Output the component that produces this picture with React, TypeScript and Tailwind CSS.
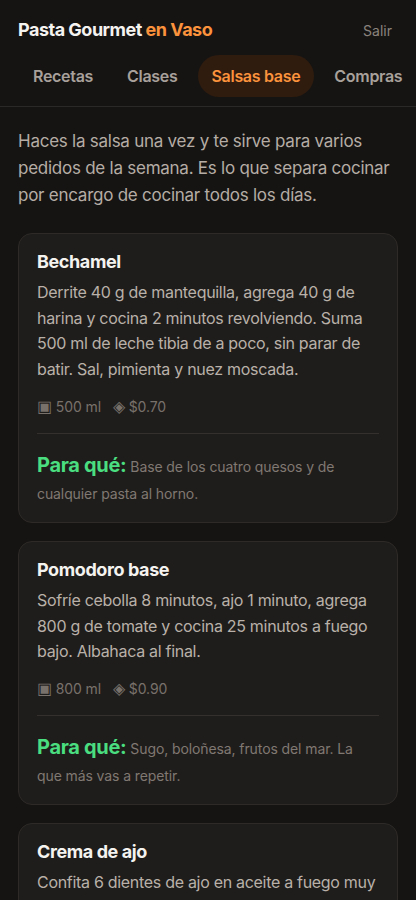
import { useState } from 'react';

interface Sauce {
  name: string;
  steps: string;
  yieldMl: string;
  cost: string;
  usage: string;
}

const TABS = ['Recetas', 'Clases', 'Salsas base', 'Compras', 'Pedidos'];

const SAUCES: Sauce[] = [
  {
    name: 'Bechamel',
    steps:
      'Derrite 40 g de mantequilla, agrega 40 g de harina y cocina 2 minutos revolviendo. Suma 500 ml de leche tibia de a poco, sin parar de batir. Sal, pimienta y nuez moscada.',
    yieldMl: '500 ml',
    cost: '$0.70',
    usage: 'Base de los cuatro quesos y de cualquier pasta al horno.',
  },
  {
    name: 'Pomodoro base',
    steps:
      'Sofríe cebolla 8 minutos, ajo 1 minuto, agrega 800 g de tomate y cocina 25 minutos a fuego bajo. Albahaca al final.',
    yieldMl: '800 ml',
    cost: '$0.90',
    usage: 'Sugo, boloñesa, frutos del mar. La que más vas a repetir.',
  },
  {
    name: 'Crema de ajo',
    steps:
      'Confita 6 dientes de ajo en aceite a fuego muy bajo 20 minutos. Licúa con 200 ml de crema y una pizca de sal.',
    yieldMl: '250 ml',
    cost: '$0.80',
    usage: 'Pastas cortas, pollo y champiñones.',
  },
];

function SauceCard({ sauce }: { sauce: Sauce }) {
  return (
    <div className="rounded-[14px] border border-[#2d2a27] bg-[#1f1d1b] px-[18px] pt-4 pb-[15px]">
      <h3 className="text-[18px] font-bold leading-6 tracking-[-0.4px] text-[#f5f3f0]">{sauce.name}</h3>
      <p className="mt-1.5 text-[16px] leading-[25.7px] tracking-[-0.3px] text-[#b9b1a9]">{sauce.steps}</p>

      {/* rendimiento y costo */}
      <div className="mt-[14px] flex h-5 items-center gap-3 text-[14px] leading-5 tracking-[-0.1px] text-[#78716b]">
        <span>
          <span className="text-[16px] leading-none">▣</span> {sauce.yieldMl}
        </span>
        <span>
          <span className="text-[16px] leading-none">◈</span> {sauce.cost}
        </span>
      </div>

      <div className="mt-4 border-t border-[#33302d] pt-[19px]">
        <p className="text-[14px] leading-[27px] tracking-[-0.1px] text-[#807872]">
          <span className="text-[20px] font-bold leading-none tracking-[-0.3px] text-[#4ade80]">Para qué:</span>{' '}
          {sauce.usage}
        </p>
      </div>
    </div>
  );
}

export default function App() {
  const [active, setActive] = useState('Salsas base');

  return (
    <div className="min-h-screen bg-[#161413] font-['Inter','Noto_Sans',sans-serif] antialiased">
      {/* encabezado */}
      <header className="border-b border-[#2b2927]">
        <div className="flex items-center justify-between pl-[18px] pr-6 pt-[18px]">
          <h1 className="text-[18px] font-bold leading-6 tracking-[-0.5px] text-[#f5f3f0]">
            Pasta Gourmet <span className="text-[#fb923c]">en Vaso</span>
          </h1>
          <button className="text-[14px] text-[#8a837d]">Salir</button>
        </div>
        <nav className="mt-[13px] flex gap-1.5 overflow-hidden px-[19px] pb-[9px]">
          {TABS.map((tab) => (
            <button
              key={tab}
              onClick={() => setActive(tab)}
              className={
                tab === active
                  ? 'shrink-0 whitespace-nowrap rounded-full bg-[#2f1c0f] px-[14px] py-[10px] text-[16px] font-semibold leading-[22px] tracking-[-0.3px] text-[#fb923c]'
                  : 'shrink-0 whitespace-nowrap rounded-full px-[14px] py-[10px] text-[16px] font-semibold leading-[22px] tracking-[-0.3px] text-[#a8a19b]'
              }
            >
              {tab}
            </button>
          ))}
        </nav>
      </header>

      <main className="px-[18px] pt-[21px] pb-6">
        <p className="text-[17px] leading-[27px] tracking-[-0.25px] text-[#b5ada5]">
          Haces la salsa una vez y te sirve para varios pedidos de la semana. Es lo que separa cocinar por encargo de
          cocinar todos los días.
        </p>

        <div className="mt-[24px] flex flex-col gap-[18px]">
          {SAUCES.map((s) => (
            <SauceCard key={s.name} sauce={s} />
          ))}
        </div>
      </main>
    </div>
  );
}
